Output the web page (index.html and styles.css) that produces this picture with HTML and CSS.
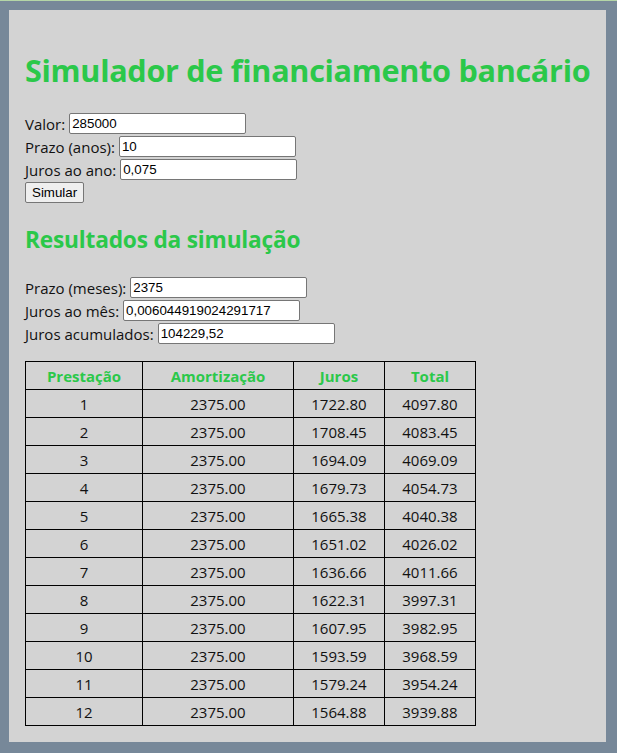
FILE: index.html
```html
<!DOCTYPE html>
<html lang="pt-BR">
<head>
<meta charset="utf-8">
<title>Simulador de financiamento bancário</title>
<link rel="stylesheet" href="styles.css">
</head>
<body>
<main class="panel">
  <h1 class="title">Simulador de financiamento bancário</h1>
  <form class="form">
    <div class="row"><label>Valor:</label> <input class="field" type="text" value="285000"></div>
    <div class="row"><label>Prazo (anos):</label> <input class="field" type="text" value="10"></div>
    <div class="row"><label>Juros ao ano:</label> <input class="field" type="text" value="0,075"></div>
    <div class="row"><button type="button" class="btn">Simular</button></div>
  </form>
  <h2 class="subtitle">Resultados da simulação</h2>
  <div class="form">
    <div class="row"><label>Prazo (meses):</label> <input class="field" type="text" value="2375"></div>
    <div class="row"><label>Juros ao mês:</label> <input class="field" type="text" value="0,006044919024291717"></div>
    <div class="row"><label>Juros acumulados:</label> <input class="field" type="text" value="104229,52"></div>
  </div>
  <table class="grid">
    <colgroup><col class="c1"><col class="c2"><col class="c3"><col class="c4"></colgroup>
    <thead>
      <tr><th>Prestação</th><th>Amortização</th><th>Juros</th><th>Total</th></tr>
    </thead>
    <tbody>
      <tr><td>1</td><td>2375.00</td><td>1722.80</td><td>4097.80</td></tr>
      <tr><td>2</td><td>2375.00</td><td>1708.45</td><td>4083.45</td></tr>
      <tr><td>3</td><td>2375.00</td><td>1694.09</td><td>4069.09</td></tr>
      <tr><td>4</td><td>2375.00</td><td>1679.73</td><td>4054.73</td></tr>
      <tr><td>5</td><td>2375.00</td><td>1665.38</td><td>4040.38</td></tr>
      <tr><td>6</td><td>2375.00</td><td>1651.02</td><td>4026.02</td></tr>
      <tr><td>7</td><td>2375.00</td><td>1636.66</td><td>4011.66</td></tr>
      <tr><td>8</td><td>2375.00</td><td>1622.31</td><td>3997.31</td></tr>
      <tr><td>9</td><td>2375.00</td><td>1607.95</td><td>3982.95</td></tr>
      <tr><td>10</td><td>2375.00</td><td>1593.59</td><td>3968.59</td></tr>
      <tr><td>11</td><td>2375.00</td><td>1579.24</td><td>3954.24</td></tr>
      <tr><td>12</td><td>2375.00</td><td>1564.88</td><td>3939.88</td></tr>
    </tbody>
  </table>
</main>
</body>
</html>
```
FILE: styles.css
```css
html, body {
  margin: 0;
  padding: 0;
}
body {
  background: #778899;
  border-top: 1px solid #b5d6a7;
  padding: 9px 11px 10px 9px;
  font-family: "Open Sans", "Noto Sans", sans-serif;
  font-size: 15px;
  color: #111;
}
.panel {
  background: #d3d3d3;
  padding: 16px 16px 16px 16px;
}
.title {
  color: #2bc84a;
  font-size: 30.6px;
  font-weight: 700;
  margin: 23px 0 21px 0;
  line-height: 42px;
  letter-spacing: -0.3px;
  white-space: nowrap;
}
.subtitle {
  color: #2bc84a;
  font-size: 22.7px;
  font-weight: 700;
  margin: 20px 0 20px 0;
  line-height: 32px;
  letter-spacing: -0.2px;
}
.form {
  display: flex;
  flex-direction: column;
}
.row {
  height: 23px;
  display: flex;
  align-items: center;
  gap: 4px;
  white-space: nowrap;
}
.field {
  font-family: "Liberation Sans", Arial, sans-serif;
  font-size: 13.33px;
  width: 177px;
  height: 21px;
  box-sizing: border-box;
  border: 1px solid #767676;
  border-radius: 2px;
  padding: 1px 2px;
  background: #fff;
  color: #000;
  margin: 0;
}
.btn {
  font-family: "Liberation Sans", Arial, sans-serif;
  font-size: 13.33px;
  height: 21px;
  padding: 1px 6px;
  border: 1px solid #767676;
  border-radius: 2px;
  background: #efefef;
  color: #000;
  margin: 0;
}
.grid {
  margin-top: 16px;
  border-collapse: collapse;
  width: 451px;
  table-layout: fixed;
}
.c1 { width: 117px; }
.c2 { width: 151px; }
.c3 { width: 91px; }
.c4 { width: 91px; }
.grid th, .grid td {
  border: 1px solid #000;
  height: 27px;
  padding: 0;
  text-align: center;
  font-size: 15px;
}
.grid th {
  color: #2bc84a;
  font-weight: 700;
}
```
